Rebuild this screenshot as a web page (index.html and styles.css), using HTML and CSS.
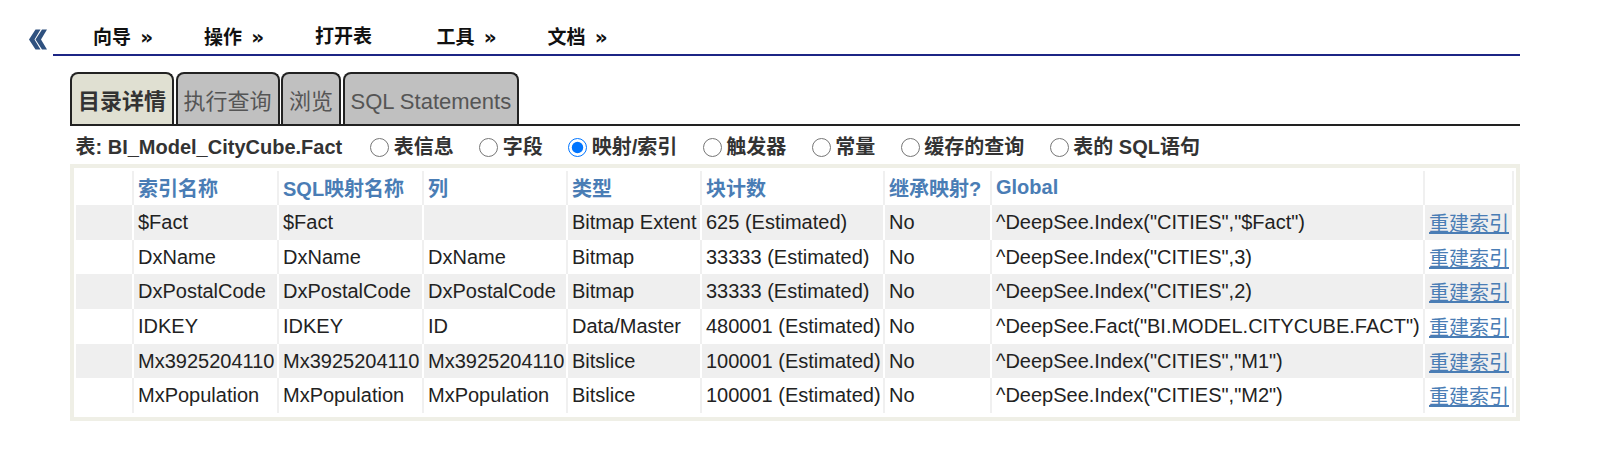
FILE: index.html
```html
<!DOCTYPE html>
<html lang="zh">
<head>
  <meta charset="UTF-8" />
  <meta name="viewport" content="width=device-width, initial-scale=1.0" />
  <title>目录详情</title>
  <link rel="stylesheet" href="styles.css">
</head>
<body>
  <div class="top">
    <svg class="back" viewBox="0 0 20 21" aria-hidden="true">
      <path d="M7.5 0.5 L12.5 0.5 L6.5 10.5 L12.5 20.5 L7.5 20.5 L1 10.5 Z" />
      <path d="M14 0.5 L19 0.5 L13 10.5 L19 20.5 L14 20.5 L7.5 10.5 Z" />
    </svg>
    <div class="menu">
      <span class="menu-item">向导 <span class="arr">»</span></span>
      <span class="menu-item">操作 <span class="arr">»</span></span>
      <span class="menu-item wide">打开表</span>
      <span class="menu-item">工具 <span class="arr">»</span></span>
      <span class="menu-item">文档 <span class="arr">»</span></span>
    </div>
  </div>

  <div class="tabs">
    <div class="tab active">目录详情</div>
    <div class="tab">执行查询</div>
    <div class="tab">浏览</div>
    <div class="tab">SQL Statements</div>
  </div>

  <div class="info">
    <span class="table-name">表: BI_Model_CityCube.Fact</span>
    <label class="option first"><input type="radio" name="view"> 表信息</label>
    <label class="option"><input type="radio" name="view"> 字段</label>
    <label class="option"><input type="radio" name="view" checked> 映射/索引</label>
    <label class="option"><input type="radio" name="view"> 触发器</label>
    <label class="option"><input type="radio" name="view"> 常量</label>
    <label class="option"><input type="radio" name="view"> 缓存的查询</label>
    <label class="option"><input type="radio" name="view"> 表的 SQL语句</label>
  </div>

  <div class="box">
    <table class="maps">
      <thead>
        <tr>
          <th class="c0"></th>
          <th class="c1">索引名称</th>
          <th class="c2">SQL映射名称</th>
          <th class="c3">列</th>
          <th class="c4">类型</th>
          <th class="c5">块计数</th>
          <th class="c6">继承映射?</th>
          <th class="c7">Global</th>
          <th class="c8"></th>
        </tr>
      </thead>
      <tbody>
        <tr class="odd">
          <td></td><td>$Fact</td><td>$Fact</td><td></td><td>Bitmap Extent</td>
          <td>625 (Estimated)</td><td>No</td><td>^DeepSee.Index("CITIES","$Fact")</td>
          <td><a href="#">重建索引</a></td>
        </tr>
        <tr>
          <td></td><td>DxName</td><td>DxName</td><td>DxName</td><td>Bitmap</td>
          <td>33333 (Estimated)</td><td>No</td><td>^DeepSee.Index("CITIES",3)</td>
          <td><a href="#">重建索引</a></td>
        </tr>
        <tr class="odd">
          <td></td><td>DxPostalCode</td><td>DxPostalCode</td><td>DxPostalCode</td><td>Bitmap</td>
          <td>33333 (Estimated)</td><td>No</td><td>^DeepSee.Index("CITIES",2)</td>
          <td><a href="#">重建索引</a></td>
        </tr>
        <tr>
          <td></td><td>IDKEY</td><td>IDKEY</td><td>ID</td><td>Data/Master</td>
          <td>480001 (Estimated)</td><td>No</td><td>^DeepSee.Fact("BI.MODEL.CITYCUBE.FACT")</td>
          <td><a href="#">重建索引</a></td>
        </tr>
        <tr class="odd">
          <td></td><td>Mx3925204110</td><td>Mx3925204110</td><td>Mx3925204110</td><td>Bitslice</td>
          <td>100001 (Estimated)</td><td>No</td><td>^DeepSee.Index("CITIES","M1")</td>
          <td><a href="#">重建索引</a></td>
        </tr>
        <tr>
          <td></td><td>MxPopulation</td><td>MxPopulation</td><td>MxPopulation</td><td>Bitslice</td>
          <td>100001 (Estimated)</td><td>No</td><td>^DeepSee.Index("CITIES","M2")</td>
          <td><a href="#">重建索引</a></td>
        </tr>
      </tbody>
    </table>
  </div>
</body>
</html>
```

FILE: styles.css
```css
body {
  margin: 0;
  font-family: "Liberation Sans", "Noto Sans CJK SC", sans-serif;
  color: #222;
  background: #fff;
}
.top {
  display: flex;
  align-items: flex-start;
  padding: 23px 80px 0 28px;
}
.back {
  width: 20px;
  height: 21px;
  margin-top: 6px;
  flex: none;
  fill: #2f517f;
}
.menu {
  flex: 1;
  display: flex;
  margin-left: 5px;
  padding: 0 0 2px 40px;
  border-bottom: 2px solid #1c2585;
  line-height: 28px;
  font-size: 19px;
  font-weight: bold;
  color: #111;
}
.menu-item {
  width: 111px;
}
.menu-item.wide {
  width: 121.5px;
}
.arr {
  font-family: "DejaVu Sans", sans-serif;
  font-size: 20px;
  margin-left: 4px;
}
.tabs {
  display: flex;
  margin: 15.5px 80px 0 70px;
  border-bottom: 2px solid #222;
}
.tab {
  border: 2px solid #222;
  border-bottom: none;
  border-radius: 8px 8px 0 0;
  padding: 13px 6px 8px;
  margin-right: 1.5px;
  line-height: 29px;
  font-size: 22px;
  background: #c0c0c0;
  color: #555;
}
.tab.active {
  background: #e0e0d2;
  color: #333;
  font-weight: bold;
}
.info {
  display: flex;
  align-items: center;
  margin: 0 80px 0 75.5px;
  padding-top: 7.5px;
  line-height: 28px;
  font-size: 20px;
  font-weight: bold;
  color: #333;
}
.option {
  display: flex;
  align-items: center;
  margin-left: 25.5px;
}
.option.first {
  margin-left: 28px;
}
.option input {
  width: 19px;
  height: 19px;
  margin: 0 4.5px 0 0;
}
.box {
  margin: 3.3px 80px 0 70px;
  border: 4px solid #efefe6;
  padding: 2.7px 2px 4px 2px;
}
.maps {
  width: 100%;
  table-layout: fixed;
  border-collapse: separate;
  border-spacing: 0;
  font-size: 20px;
}
.maps th,
.maps td {
  box-sizing: border-box;
  padding: 0 4px;
  border-left: 2px solid #f0f0f0;
  white-space: nowrap;
  text-align: left;
}
.maps th:first-child,
.maps td:first-child {
  border-left: none;
}
.maps th:last-child,
.maps td:last-child {
  border-right: 2px solid #f0f0f0;
}
.maps th {
  height: 34px;
  color: #4a7db5;
}
.maps td {
  height: 34.7px;
  color: #222;
}
.maps tr.odd td {
  background: #efefef;
  border-left-color: #fff;
}
.maps tr.odd td:first-child {
  border-left: none;
}
.maps tr.odd td:last-child {
  border-right-color: #fff;
}
.maps a {
  color: #4a7db5;
}
.c0 { width: 56px; }
.c1 { width: 145px; }
.c2 { width: 145px; }
.c3 { width: 144px; }
.c4 { width: 134px; }
.c5 { width: 183px; }
.c6 { width: 107px; }
.c7 { width: 433px; }
.c8 { width: 91px; }
```
